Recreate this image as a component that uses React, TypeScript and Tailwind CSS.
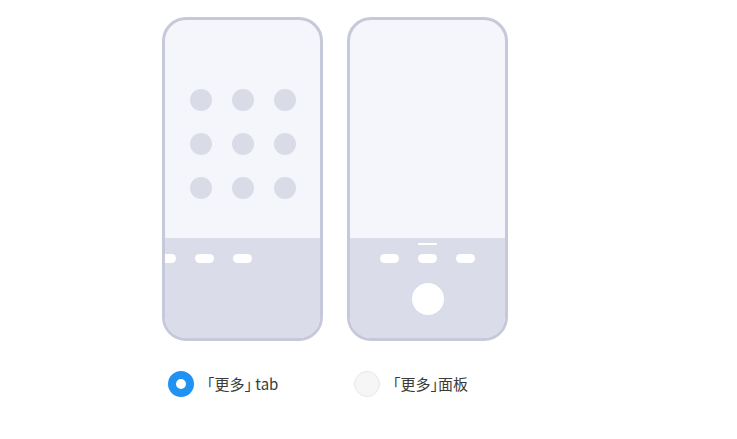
const FONT = { fontFamily: '"Noto Sans CJK SC", "Noto Sans", sans-serif' };

function Pill() {
  return <div className="h-[9px] w-[19px] shrink-0 rounded-full bg-white" />;
}

function TabPhone() {
  return (
    <div className="flex h-[324px] w-[161px] flex-col overflow-hidden rounded-[24px] border-[3px] border-[#c6c9da] bg-[#f5f6fb]">
      <div className="h-[218px] pt-[69px]">
        <div className="mx-auto grid w-fit grid-cols-3 gap-x-[20px] gap-y-[22px]">
          {Array.from({ length: 9 }).map((_, i) => (
            <div key={i} className="h-[22px] w-[22px] rounded-full bg-[#d9dce7]" />
          ))}
        </div>
      </div>
      <div className="flex-1 bg-[#dadcea] pt-[16px]">
        <div className="ml-[-8px] flex gap-[19px]">
          <Pill />
          <Pill />
          <Pill />
        </div>
      </div>
    </div>
  );
}

function PanelPhone() {
  return (
    <div className="flex h-[324px] w-[161px] flex-col overflow-hidden rounded-[24px] border-[3px] border-[#c6c9da] bg-[#f5f6fb]">
      <div className="h-[218px]" />
      <div className="flex flex-1 flex-col items-center bg-[#dadcea] pt-[5px]">
        <div className="h-[2px] w-[19px] rounded-full bg-white" />
        <div className="mt-[9px] flex gap-[19px]">
          <Pill />
          <Pill />
          <Pill />
        </div>
        <div className="mt-[20px] h-[32px] w-[32px] rounded-full bg-white" />
      </div>
    </div>
  );
}

export default function App() {
  return (
    <div className="h-[439px] w-[737px] bg-white" style={FONT}>
      <div className="flex gap-[24px] pl-[162px] pt-[17px]">
        <TabPhone />
        <PanelPhone />
      </div>
      <div className="mt-[30px] flex pl-[168px]">
        <div className="flex w-[186px] items-center gap-[13px]">
          <div className="h-[26px] w-[26px] rounded-full border-[8px] border-[#2092f2] bg-white" />
          <span className="text-[15px] text-[#3a3a3a]">｢更多｣ tab</span>
        </div>
        <div className="flex items-center gap-[13px]">
          <div className="h-[26px] w-[26px] rounded-full border border-[#e8e8e8] bg-[#f6f6f6]" />
          <span className="text-[15px] text-[#3a3a3a]">｢更多｣面板</span>
        </div>
      </div>
    </div>
  );
}
